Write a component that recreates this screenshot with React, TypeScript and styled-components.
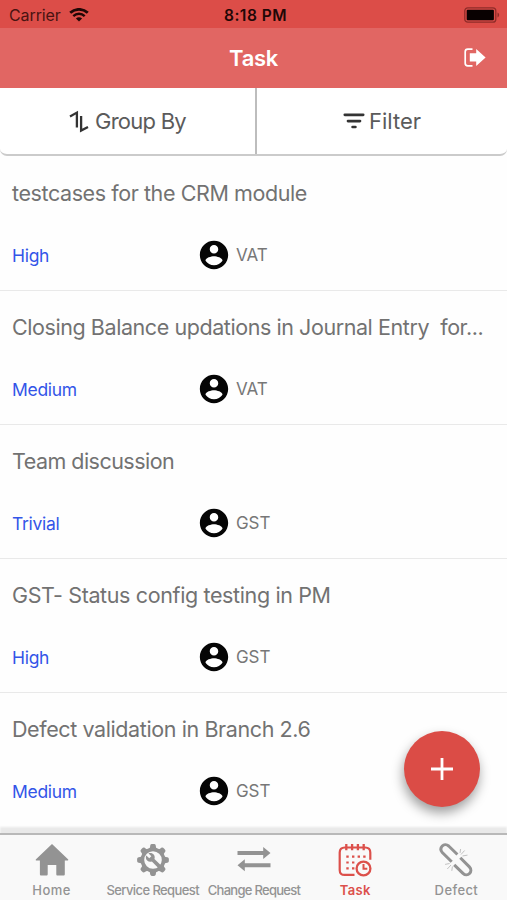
import React from "react";
import styled, { createGlobalStyle } from "styled-components";

const GlobalStyle = createGlobalStyle`
  * { box-sizing: border-box; }
  body {
    margin: 0;
    background: #fefefe;
    font-family: Inter, "Liberation Sans", sans-serif;
    font-kerning: normal;
  }
`;

const Screen = styled.div`
  position: relative;
  width: 507px;
  height: 900px;
  display: flex;
  flex-direction: column;
  overflow: hidden;
  background: #fefefe;
`;

const StatusBar = styled.div`
  height: 28px;
  flex: none;
  padding: 2px 8px 0 9px;
  display: grid;
  grid-template-columns: 1fr auto 1fr;
  align-items: center;
  background: #dc4d48;
  color: #4a1311;
  font-size: 16px;
`;

const Carrier = styled.div`
  display: flex;
  align-items: center;
  gap: 8px;
  letter-spacing: -0.1px;
  svg { color: #210706; }
`;

const Clock = styled.div`
  font-weight: 600;
  font-size: 15.5px;
  letter-spacing: 0.5px;
  padding-left: 3px;
  color: #210706;
`;

const BatterySlot = styled.div`
  display: flex;
  justify-content: flex-end;
  margin-right: -1px;
`;

const NavBar = styled.div`
  height: 60px;
  flex: none;
  padding: 0 21px;
  display: grid;
  grid-template-columns: 1fr auto 1fr;
  align-items: center;
  background: #e16663;
  color: #fff;
`;

const NavTitle = styled.h1`
  grid-column: 2;
  margin: 0;
  font-size: 22px;
  font-weight: 600;
  letter-spacing: -0.3px;
`;

const LogoutButton = styled.button`
  justify-self: end;
  display: flex;
  padding: 0;
  margin-top: -2px;
  border: 0;
  background: none;
  color: #fff;
`;

const Toolbar = styled.div`
  height: 68px;
  flex: none;
  display: flex;
  background: #fff;
  border-bottom: 2px solid #cbcbcb;
  border-radius: 0 0 7px 7px;
`;

const ToolButton = styled.button<{ $divider?: boolean; $gap: number; $spacing: number }>`
  flex: ${(p) => (p.$divider ? "0 0 257px" : "1")};
  display: flex;
  align-items: center;
  justify-content: center;
  gap: ${(p) => p.$gap}px;
  padding: 0;
  border: 0;
  border-right: ${(p) => (p.$divider ? "2px solid #bdbdbd" : "0")};
  background: none;
  color: #5b5b5b;
  font: 400 22px Inter, sans-serif;
  letter-spacing: ${(p) => p.$spacing}px;
`;

const List = styled.ul`
  flex: 1;
  margin: 0;
  padding: 0;
  list-style: none;
  overflow: hidden;
`;

const Row = styled.li`
  height: 134px;
  padding: 1px 12px 0;
  border-bottom: 1px solid #e9e9e9;
  &:first-child { height: 135px; padding-top: 2px; }
  &:last-child { border-bottom: 0; }
`;

const RowTitle = styled.div<{ $spacing: number }>`
  height: 72px;
  line-height: 71px;
  white-space: pre;
  color: #727272;
  font-size: 21.5px;
  letter-spacing: ${(p) => p.$spacing}px;
`;

const RowMeta = styled.div`
  height: 50px;
  display: grid;
  grid-template-columns: 185px 1fr;
  align-items: center;
`;

const Priority = styled.span`
  color: #3355e8;
  font-size: 17.5px;
  letter-spacing: -0.3px;
`;

const Owner = styled.span`
  display: flex;
  align-items: center;
  gap: 5px;
  color: #777;
  font-size: 17px;
  letter-spacing: -0.1px;
`;

const AddButton = styled.button`
  position: absolute;
  left: 404px;
  top: 731px;
  width: 76px;
  height: 76px;
  padding: 0;
  display: grid;
  place-items: center;
  border: 0;
  border-radius: 50%;
  background: #db4c46;
  box-shadow: -1px 6px 12px rgba(0, 0, 0, 0.38);
`;

const TabBar = styled.nav`
  position: relative;
  height: 67px;
  flex: none;
  display: grid;
  grid-template-columns: repeat(5, 1fr);
  padding-left: 1px;
  background: #f9f9f9;
  border-top: 2px solid #b9b9b9;
  box-shadow: 0 -6px 2px #e9e9e9;
`;

const Tab = styled.a<{ $active?: boolean; $spacing: number }>`
  display: flex;
  flex-direction: column;
  align-items: center;
  padding-top: 8px;
  white-space: nowrap;
  color: ${(p) => (p.$active ? "#dc504b" : "#939393")};
  font-size: 13px;
  font-weight: ${(p) => (p.$active ? 600 : 500)};
  line-height: 16px;
  letter-spacing: ${(p) => p.$spacing}px;
  svg { display: block; flex: none; margin-bottom: 5px; }
`;

const Wifi = () => (
  <svg width="20" height="14" viewBox="0 0 20 14" fill="none" stroke="currentColor">
    <path d="M1.2 4.8C6.2.2 13.8.2 18.8 4.8" strokeWidth="2.8" />
    <path d="M4.3 8.1c3.3-3 8.1-3 11.4 0" strokeWidth="2.5" />
    <path d="M10 13.6 6.9 10.5c1.8-1.6 4.4-1.6 6.2 0z" fill="currentColor" stroke="none" />
  </svg>
);

const Battery = () => (
  <svg width="36" height="16" viewBox="0 0 36 16">
    <rect x="0.8" y="0.8" width="31" height="14.4" rx="3" fill="none" stroke="#8f2c29" strokeWidth="1.3" />
    <rect x="2.7" y="2.7" width="27.2" height="10.6" rx="1" fill="#090101" />
    <path d="M33.5 5.6c2.2.8 2.2 4 0 4.8z" fill="#8f2c29" />
  </svg>
);

const Logout = () => (
  <svg width="22" height="19" viewBox="0 0 22 19">
    <path d="M8.5 1.2H3.8C2.2 1.2 1.2 2.2 1.2 3.8v11.4c0 1.6 1 2.6 2.6 2.6h4.7" fill="none" stroke="currentColor" strokeWidth="1.7" />
    <path d="M5.8 5.2h6.4V.9L21.6 9.4l-9.4 8.5v-4.3H5.8z" fill="currentColor" />
  </svg>
);

const SortArrows = () => (
  <svg width="20" height="23" viewBox="0 0 20 23" fill="none" stroke="#333" strokeWidth="2.3">
    <path d="M7.9 17.6V2.6L1 6.4" />
    <path d="M12.1 6v14.6L19 17" />
  </svg>
);

const FilterBars = () => (
  <svg width="22" height="16" viewBox="0 0 22 16" stroke="#333" strokeWidth="2.7" strokeLinecap="round">
    <path d="M1.8 1.8h18.4M5 8.1h12M9.6 14h2.8" />
  </svg>
);

const Account = () => (
  <svg width="34" height="34" viewBox="0 0 24 24" fill="#050505">
    <path d="M12 2C6.48 2 2 6.48 2 12s4.48 10 10 10 10-4.48 10-10S17.52 2 12 2zm0 3c1.66 0 3 1.34 3 3s-1.34 3-3 3-3-1.34-3-3 1.34-3 3-3zm0 14.2c-2.5 0-4.71-1.28-6-3.22.03-1.99 4-3.08 6-3.08 1.99 0 5.97 1.09 6 3.08-1.29 1.94-3.5 3.22-6 3.22z" />
  </svg>
);

const Plus = () => (
  <svg width="22" height="22" viewBox="0 0 22 22" stroke="#fff" strokeWidth="2.8">
    <path d="M11 0v22M0 11h22" />
  </svg>
);

const HomeIcon = () => (
  <svg width="34" height="34" viewBox="0 0 34 34" fill="currentColor">
    <path d="M17 1 33 16.2c.6.6.3 1.3-.5 1.3h-2.7v13.7c0 .8-.5 1.3-1.3 1.3h-6c-.8 0-1.2-.5-1.2-1.3v-9.3h-8.6v9.3c0 .8-.5 1.3-1.3 1.3H6.2c-.8 0-1.3-.5-1.3-1.3V17.5H1.5c-.8 0-1.1-.7-.5-1.3z" />
  </svg>
);

const GearIcon = () => (
  <svg width="34" height="34" viewBox="0 0 34 34">
    <g fill="currentColor">
      {[0, 45, 90, 135, 180, 225, 270, 315].map((a) => (
        <path key={a} transform={`rotate(${a} 17 17)`} d="M12 6.6c1.8-.9 2-2.1 2.2-3.8.2-1.4.9-1.7 2.8-1.7s2.6.3 2.8 1.7c.2 1.7.4 2.9 2.2 3.8z" />
      ))}
    </g>
    <circle cx="17" cy="17" r="10.6" fill="none" stroke="currentColor" strokeWidth="3.6" />
    <path
      transform="translate(9.2 9.2) scale(.68)"
      fill="currentColor"
      d="M22.7 19l-9.1-9.1c.9-2.3.4-5-1.5-6.9-2-2-5-2.4-7.4-1.3L9 6 6 9 1.6 4.7C.4 7.1.9 10.1 2.9 12.1c1.9 1.9 4.6 2.4 6.9 1.5l9.1 9.1c.4.4 1 .4 1.4 0l2.3-2.3c.5-.4.5-1.1.1-1.4z"
    />
  </svg>
);

const SwapIcon = () => (
  <svg width="34" height="34" viewBox="0 0 34 34" fill="currentColor">
    <path d="M.5 8.1h25.7V4L33.5 10l-7.3 6v-4H.5zM33.5 20.2H7.8v-4L.5 22.2l7.3 6v-4h25.7z" />
  </svg>
);

const CalendarIcon = () => (
  <svg width="34" height="34" viewBox="0 0 34 34" fill="none" stroke="currentColor">
    <path d="M16.5 31.9H6.8C3.2 31.9 1.7 30.4 1.7 27V9.5c0-3.4 1.5-5 5.1-5h20.4c3.6 0 5.1 1.6 5.1 5v7.2" strokeWidth="2.2" />
    <path d="M8.3 1v6.3M14.1 1v6.3M19.9 1v6.3M25.7 1v6.3" strokeWidth="2.3" />
    <path d="M8.3 13.7h2.4M14 13.7h2.4M19.6 13.7H22M25.2 13.7h2.4M8.3 19.5h2.4M14 19.5h2.4M8.3 25.3h2.4M14 25.3h2.4" strokeWidth="2.2" />
    <circle cx="25.5" cy="25.5" r="6.9" strokeWidth="2.3" />
    <path d="M25.5 21v4.7h3.8" strokeWidth="2" />
  </svg>
);

const BrokenLinkIcon = () => (
  <svg width="34" height="34" viewBox="0 0 34 34" fill="none" stroke="currentColor">
    <g strokeWidth="3">
      <path d="M12.7 18.8 3.3 9.5C-.6 5 5-1 9.7 3l8.7 8.5" />
      <path d="m21.3 14.7 9.1 9.2c4.3 4.5-1.8 10.8-6.4 6.4l-8.8-8.5" />
    </g>
    <path d="m22 11.5 3.6-4M23.5 13l5-.9M21 10l.6-4M12 22l-3.7 4M10.6 20.5l-4.5.9M13.4 23.5l-.6 4.4" strokeWidth="1" opacity=".55" />
  </svg>
);

const tasks = [
  { title: "testcases for the CRM module", priority: "High", owner: "VAT", spacing: -0.41 },
  { title: "Closing Balance updations in Journal Entry  for...", priority: "Medium", owner: "VAT", spacing: -0.43 },
  { title: "Team discussion", priority: "Trivial", owner: "GST", spacing: -0.53 },
  { title: "GST- Status config testing in PM", priority: "High", owner: "GST", spacing: -0.37 },
  { title: "Defect validation in Branch 2.6", priority: "Medium", owner: "GST", spacing: -0.4 },
];

const tabs = [
  { label: "Home", Icon: HomeIcon, spacing: 0.5 },
  { label: "Service Request", Icon: GearIcon, spacing: -0.58 },
  { label: "Change Request", Icon: SwapIcon, spacing: -0.72 },
  { label: "Task", Icon: CalendarIcon, spacing: 0.3, active: true },
  { label: "Defect", Icon: BrokenLinkIcon, spacing: 0.4 },
];

export default function App() {
  return (
    <>
      <GlobalStyle />
      <Screen>
        <StatusBar>
          <Carrier>Carrier <Wifi /></Carrier>
          <Clock>8:18 PM</Clock>
          <BatterySlot><Battery /></BatterySlot>
        </StatusBar>
        <NavBar>
          <NavTitle>Task</NavTitle>
          <LogoutButton aria-label="Log out"><Logout /></LogoutButton>
        </NavBar>
        <Toolbar>
          <ToolButton $divider $gap={6} $spacing={-0.75}><SortArrows />Group By</ToolButton>
          <ToolButton $gap={4} $spacing={0}><FilterBars />Filter</ToolButton>
        </Toolbar>
        <List>
          {tasks.map((task) => (
            <Row key={task.title}>
              <RowTitle $spacing={task.spacing}>{task.title}</RowTitle>
              <RowMeta>
                <Priority>{task.priority}</Priority>
                <Owner><Account /><span>{task.owner}</span></Owner>
              </RowMeta>
            </Row>
          ))}
        </List>
        <TabBar>
          {tabs.map(({ label, Icon, spacing, active }) => (
            <Tab key={label} $active={active} $spacing={spacing}>
              <Icon />
              {label}
            </Tab>
          ))}
        </TabBar>
        <AddButton aria-label="Add task"><Plus /></AddButton>
      </Screen>
    </>
  );
}
